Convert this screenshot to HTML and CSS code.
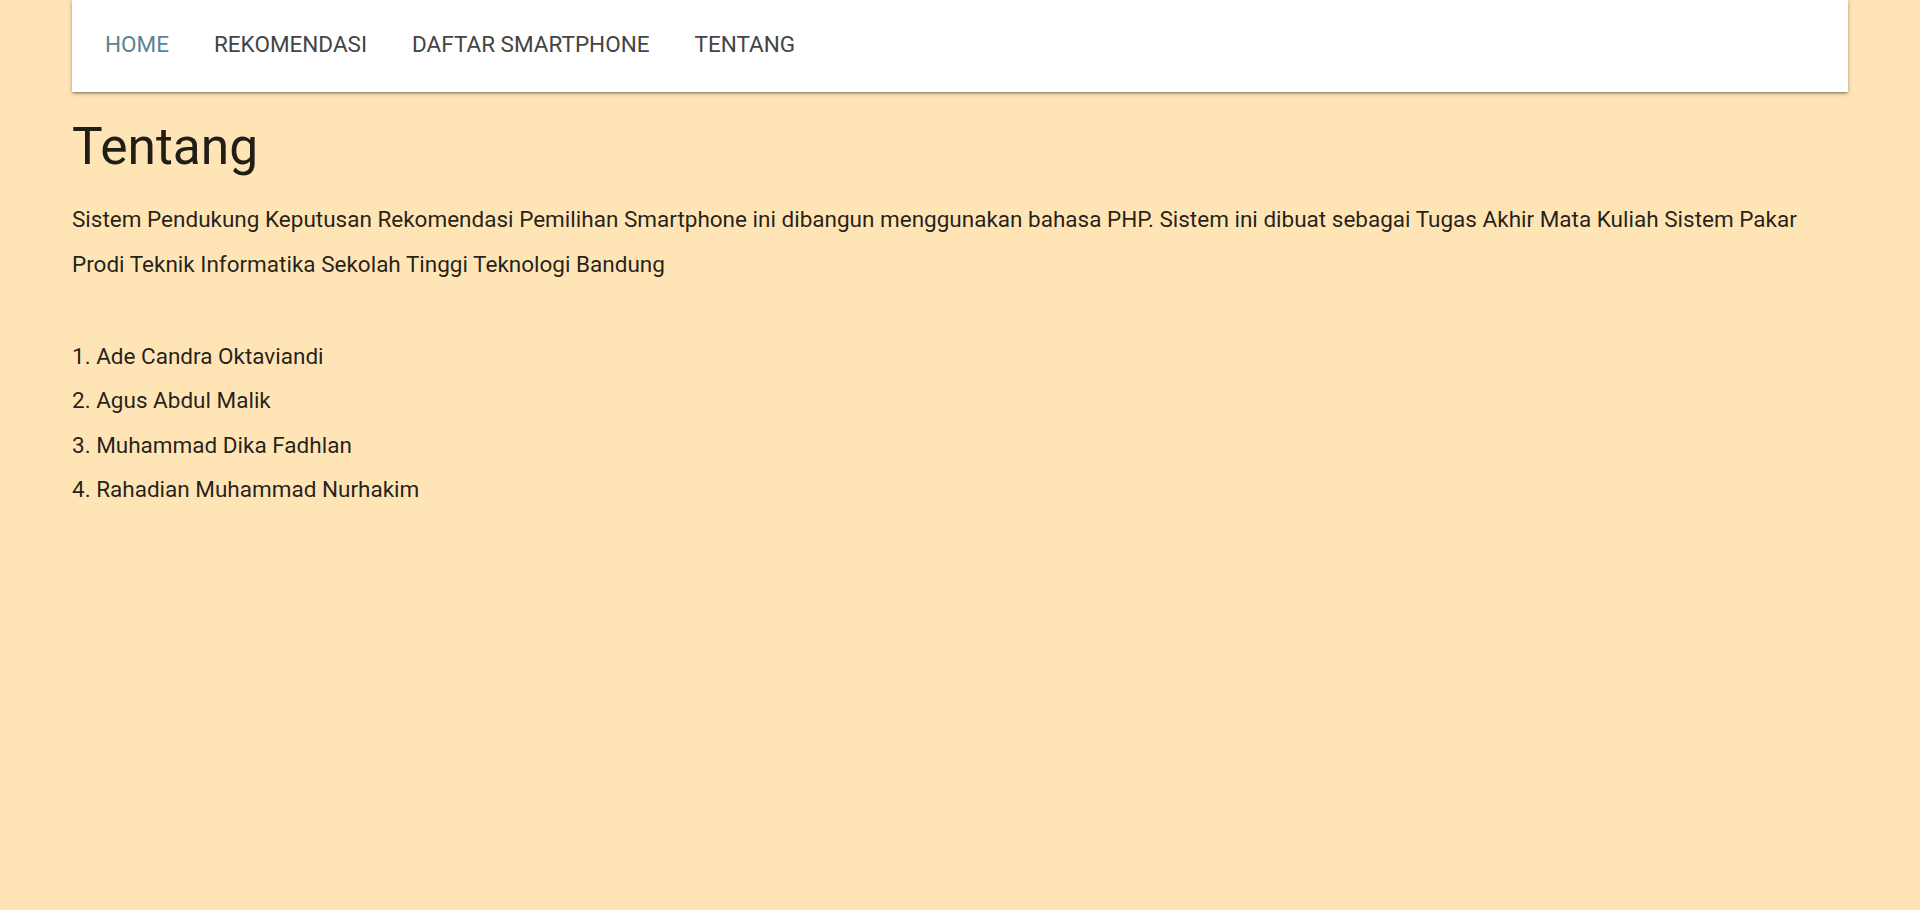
FILE: index.html
```html
<!DOCTYPE html>
<html lang="id">
<head>
<meta charset="utf-8">
<title>Tentang</title>
<link rel="stylesheet" href="styles.css">
</head>
<body>
<div class="container">
  <nav class="navbar">
    <ul class="nav-list">
      <li><a class="nav-link active" href="#">HOME</a></li>
      <li><a class="nav-link" href="#">REKOMENDASI</a></li>
      <li><a class="nav-link" href="#">DAFTAR SMARTPHONE</a></li>
      <li><a class="nav-link" href="#">TENTANG</a></li>
    </ul>
  </nav>
  <main class="content">
    <h1 class="title">Tentang</h1>
    <p class="text">Sistem Pendukung Keputusan Rekomendasi Pemilihan Smartphone ini dibangun menggunakan bahasa PHP. Sistem ini dibuat sebagai Tugas Akhir Mata Kuliah Sistem Pakar Prodi Teknik Informatika Sekolah Tinggi Teknologi Bandung</p>
    <ol class="members">
      <li>Ade Candra Oktaviandi</li>
      <li>Agus Abdul Malik</li>
      <li>Muhammad Dika Fadhlan</li>
      <li>Rahadian Muhammad Nurhakim</li>
    </ol>
  </main>
</div>
</body>
</html>
```

FILE: styles.css
```css
html, body {
  margin: 0;
  padding: 0;
}
body {
  background: #ffe4b5;
  font-family: Roboto, "Liberation Sans", sans-serif;
  color: rgba(0, 0, 0, 0.87);
  min-height: 910px;
}
.container {
  width: 1776px;
  margin: 0 auto;
}
.navbar {
  background: #fff;
  height: 92px;
  display: flex;
  align-items: flex-start;
  box-shadow: 0 2px 2px 0 rgba(0,0,0,0.16), 0 3px 1px -2px rgba(0,0,0,0.14), 0 1px 5px 0 rgba(0,0,0,0.22);
}
.nav-list {
  list-style: none;
  margin: 0 0 0 10.5px;
  padding: 0;
  display: flex;
}
.nav-link {
  display: block;
  padding: 0 22.5px;
  font-size: 22.5px;
  line-height: 88px;
  color: #444;
  text-decoration: none;
}
.nav-link.active {
  color: #5a8394;
}
.content {
  padding-top: 27px;
}
.title {
  margin: 0;
  font-size: 51.5px;
  font-weight: 400;
  line-height: 56px;
}
.text {
  margin: 21.5px 0 0;
  font-size: 22.5px;
  line-height: 45px;
}
.members {
  margin: 47px 0 0;
  padding: 0;
  list-style: decimal inside;
  font-size: 22.5px;
  line-height: 44.5px;
}
```
